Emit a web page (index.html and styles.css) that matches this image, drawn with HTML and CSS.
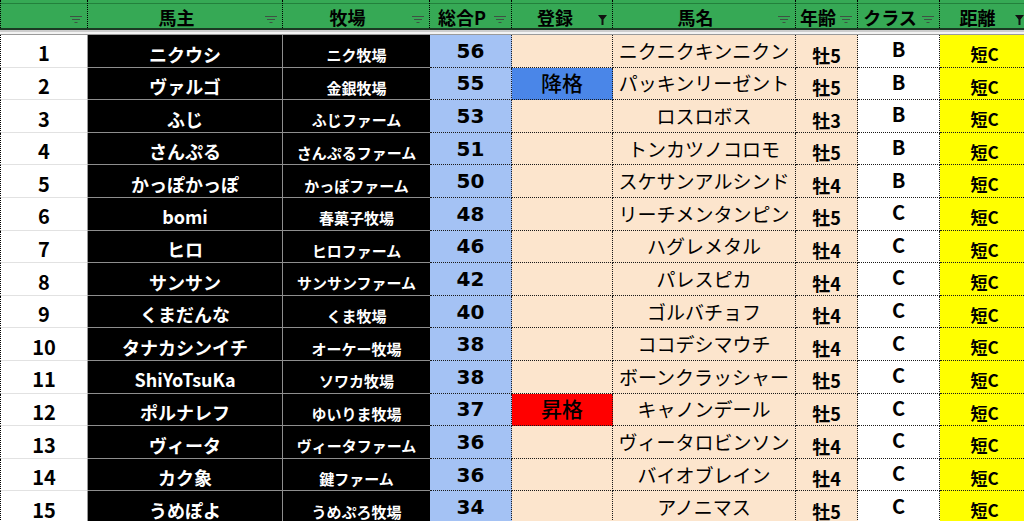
FILE: index.html
```html
<!DOCTYPE html>
<html lang="ja">
<head>
<meta charset="utf-8">
<title>馬主一覧</title>
<link rel="stylesheet" href="styles.css">
</head>
<body>
<div class="sheet">
  <div class="cols head">
    <div class="hc first"><span></span><svg class="fi" width="12" height="8" viewBox="0 0 12 8"><path d="M0 .5h12M2 3.5h8M4.5 6.5h3"/></svg></div>
    <div class="hc"><span>馬主</span><svg class="fi" width="12" height="8" viewBox="0 0 12 8"><path d="M0 .5h12M2 3.5h8M4.5 6.5h3"/></svg></div>
    <div class="hc"><span>牧場</span><svg class="fi" width="12" height="8" viewBox="0 0 12 8"><path d="M0 .5h12M2 3.5h8M4.5 6.5h3"/></svg></div>
    <div class="hc"><span>総合P</span><svg class="fi" width="12" height="8" viewBox="0 0 12 8"><path d="M0 .5h12M2 3.5h8M4.5 6.5h3"/></svg></div>
    <div class="hc"><span>登録</span><svg class="fa" width="9" height="10" viewBox="0 0 9 10"><path d="M0 0h9L5.5 4.5V10h-2V4.5Z"/></svg></div>
    <div class="hc"><span>馬名</span><svg class="fi" width="12" height="8" viewBox="0 0 12 8"><path d="M0 .5h12M2 3.5h8M4.5 6.5h3"/></svg></div>
    <div class="hc"><span>年齢</span><svg class="fi" width="12" height="8" viewBox="0 0 12 8"><path d="M0 .5h12M2 3.5h8M4.5 6.5h3"/></svg></div>
    <div class="hc"><span>クラス</span><svg class="fi" width="12" height="8" viewBox="0 0 12 8"><path d="M0 .5h12M2 3.5h8M4.5 6.5h3"/></svg></div>
    <div class="hc"><span>距離</span><svg class="fa" width="9" height="10" viewBox="0 0 9 10"><path d="M0 0h9L5.5 4.5V10h-2V4.5Z"/></svg></div>
  </div>
  <div class="sep"></div>
  <div class="cols body">
    <div class="c num">1</div><div class="c own">ニクウシ</div><div class="c farm">ニク牧場</div><div class="c tot">56</div><div class="c reg"></div><div class="c name">ニクニクキンニクン</div><div class="c age">牡5</div><div class="c cls">B</div><div class="c dist">短C</div>
    <div class="c num">2</div><div class="c own">ヴァルゴ</div><div class="c farm">金銀牧場</div><div class="c tot">55</div><div class="c reg down">降格</div><div class="c name">パッキンリーゼント</div><div class="c age">牡5</div><div class="c cls">B</div><div class="c dist">短C</div>
    <div class="c num">3</div><div class="c own">ふじ</div><div class="c farm">ふじファーム</div><div class="c tot">53</div><div class="c reg"></div><div class="c name">ロスロボス</div><div class="c age">牡3</div><div class="c cls">B</div><div class="c dist">短C</div>
    <div class="c num">4</div><div class="c own">さんぷる</div><div class="c farm">さんぷるファーム</div><div class="c tot">51</div><div class="c reg"></div><div class="c name">トンカツノコロモ</div><div class="c age">牡5</div><div class="c cls">B</div><div class="c dist">短C</div>
    <div class="c num">5</div><div class="c own">かっぽかっぽ</div><div class="c farm">かっぽファーム</div><div class="c tot">50</div><div class="c reg"></div><div class="c name">スケサンアルシンド</div><div class="c age">牡4</div><div class="c cls">B</div><div class="c dist">短C</div>
    <div class="c num">6</div><div class="c own">bomi</div><div class="c farm">春菓子牧場</div><div class="c tot">48</div><div class="c reg"></div><div class="c name">リーチメンタンピン</div><div class="c age">牡5</div><div class="c cls">C</div><div class="c dist">短C</div>
    <div class="c num">7</div><div class="c own">ヒロ</div><div class="c farm">ヒロファーム</div><div class="c tot">46</div><div class="c reg"></div><div class="c name">ハグレメタル</div><div class="c age">牡4</div><div class="c cls">C</div><div class="c dist">短C</div>
    <div class="c num">8</div><div class="c own">サンサン</div><div class="c farm">サンサンファーム</div><div class="c tot">42</div><div class="c reg"></div><div class="c name">パレスピカ</div><div class="c age">牡4</div><div class="c cls">C</div><div class="c dist">短C</div>
    <div class="c num">9</div><div class="c own">くまだんな</div><div class="c farm">くま牧場</div><div class="c tot">40</div><div class="c reg"></div><div class="c name">ゴルバチョフ</div><div class="c age">牡4</div><div class="c cls">C</div><div class="c dist">短C</div>
    <div class="c num">10</div><div class="c own">タナカシンイチ</div><div class="c farm">オーケー牧場</div><div class="c tot">38</div><div class="c reg"></div><div class="c name">ココデシマウチ</div><div class="c age">牡4</div><div class="c cls">C</div><div class="c dist">短C</div>
    <div class="c num">11</div><div class="c own">ShiYoTsuKa</div><div class="c farm">ソワカ牧場</div><div class="c tot">38</div><div class="c reg"></div><div class="c name">ボーンクラッシャー</div><div class="c age">牡5</div><div class="c cls">C</div><div class="c dist">短C</div>
    <div class="c num">12</div><div class="c own">ポルナレフ</div><div class="c farm">ゆいりま牧場</div><div class="c tot">37</div><div class="c reg up">昇格</div><div class="c name">キャノンデール</div><div class="c age">牡5</div><div class="c cls">C</div><div class="c dist">短C</div>
    <div class="c num">13</div><div class="c own">ヴィータ</div><div class="c farm">ヴィータファーム</div><div class="c tot">36</div><div class="c reg"></div><div class="c name">ヴィータロビンソン</div><div class="c age">牡4</div><div class="c cls">C</div><div class="c dist">短C</div>
    <div class="c num">14</div><div class="c own">カク象</div><div class="c farm">鍵ファーム</div><div class="c tot">36</div><div class="c reg"></div><div class="c name">バイオブレイン</div><div class="c age">牡4</div><div class="c cls">C</div><div class="c dist">短C</div>
    <div class="c num">15</div><div class="c own">うめぽよ</div><div class="c farm">うめぷろ牧場</div><div class="c tot">34</div><div class="c reg"></div><div class="c name">アノニマス</div><div class="c age">牡5</div><div class="c cls">C</div><div class="c dist">短C</div>
  </div>
</div>
</body>
</html>
```
FILE: styles.css
```css
* { box-sizing: border-box; margin: 0; padding: 0; }
html, body { width: 1024px; height: 521px; overflow: hidden; background: #fff; }
body { font-family: "Noto Sans CJK JP", "Noto Sans", sans-serif; color: #000; }

.sheet { width: 1030px; }
.cols { display: grid; grid-template-columns: 88px 195px 147px 82px 101px 183px 62px 82px 90px; }

.head {
  height: 30px;
  background: linear-gradient(#36a955 0 3px, #23803c 3px 4px, #36a955 4px);
  border-bottom: 2px solid #1b3a23;
}
.hc {
  display: grid;
  grid-template-columns: 1fr auto;
  align-items: start;
  border-right: 1px dotted #000;
  font-weight: bold;
  font-size: 18px;
  line-height: 1;
}
.hc.first { border-left: 1px dotted #000; }
.hc span { text-align: center; padding-top: 7.5px; }
.hc svg { margin-right: 5px; }
.fi { margin-top: 16px; }
.fi path { stroke: #3e5244; stroke-width: 1.2; fill: none; }
.fa { margin-top: 15px; }
.fa path { fill: #111; }

.sep {
  height: 5px;
  background: #f3f3f3;
  border-top: 2px solid #cdcdcd;
  border-bottom: 1px solid #9a9a9a;
}

.body { grid-auto-rows: 32.6px; }
.c {
  display: flex;
  justify-content: center;
  align-items: flex-start;
  line-height: 1;
  white-space: nowrap;
  border-right: 1px dotted #1a1a1a;
  border-bottom: 1px dotted #1a1a1a;
}
.num {
  background: #fff;
  border-left: 1px dotted #000;
  border-right: 1px solid #9a9a9a;
  border-bottom: 1px solid #e2e2e2;
  font-weight: bold;
  font-size: 20px;
  padding-top: 8.4px;
}
.own {
  background: #000;
  color: #fff;
  border-right: 1px solid #8e8e8e;
  border-bottom: 1px solid #8e8e8e;
  font-weight: bold;
  font-size: 18px;
  padding-top: 9.5px;
}
.farm {
  background: #000;
  color: #fff;
  border-right: 0;
  border-bottom: 1px solid #8e8e8e;
  font-weight: bold;
  font-size: 15px;
  padding-top: 12.2px;
}
.tot {
  background: #a4c2f4;
  font-family: "DejaVu Sans", sans-serif;
  font-weight: bold;
  font-size: 20px;
  padding-top: 5.9px;
}
.reg {
  background: #fce5cd;
  font-size: 21px;
  font-weight: 500;
  padding-top: 4.3px;
}
.reg.down { background: #4a86e8; }
.reg.up { background: #ff0000; }
.name {
  background: #fce5cd;
  font-size: 19px;
  padding-top: 5.9px;
}
.age {
  background: #fce5cd;
  font-weight: bold;
  font-size: 18px;
  padding-top: 10.5px;
}
.cls {
  background: #fff;
  font-weight: bold;
  font-size: 20px;
  padding-top: 4.2px;
}
.dist {
  background: #ffff00;
  font-weight: bold;
  font-size: 17px;
  padding-top: 10px;
}
```
